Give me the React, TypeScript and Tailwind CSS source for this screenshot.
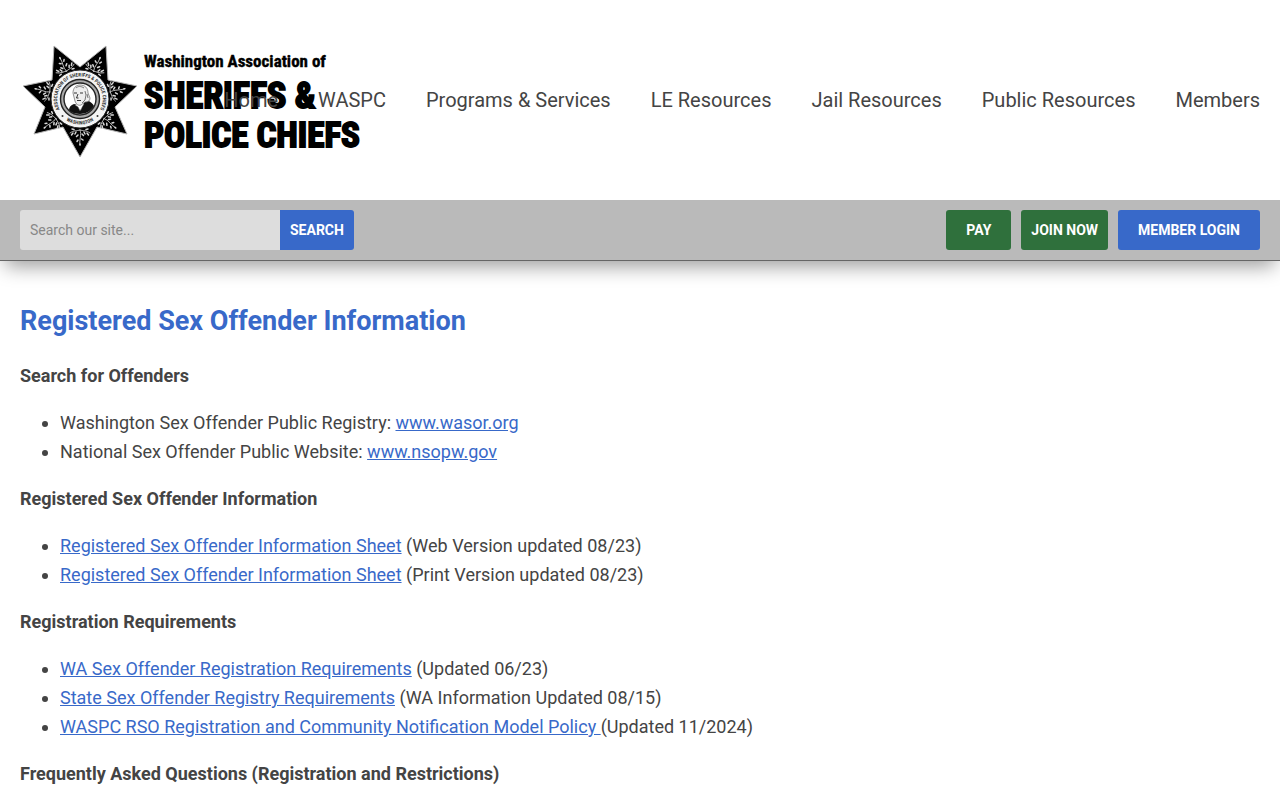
import type { ReactNode } from 'react';

const navItems = ['Home', 'WASPC', 'Programs & Services', 'LE Resources', 'Jail Resources', 'Public Resources', 'Members'];

// leaf sprig used on each point of the star, drawn pointing up from the badge centre
const Sprig = ({ angle }: { angle: number }) => (
  <g transform={`rotate(${angle} 60 59)`} fill="none" stroke="#d8d8d8" strokeLinecap="round">
    <path strokeWidth="0.8" d="M60 28C58 23 61 19 60 13M60 28C57 27 54 28 50 25M60 28C63 27 66 28 70 25" />
    <path strokeWidth="1.5" d="M58 24l-1.500-1.500M62 23l1.500-1.500M58.500 19l-1.500-1M62 18l1-1.500M60 14v-1" />
    <path strokeWidth="1.500" d="M56 26l-1-2M53 25l-1.500-2M54 28.500l-2 .5M64 26l1-2M67 25l1.500-2M66 28.500l2 .5" />
  </g>
);

const Logo = () => (
  <svg width="350" height="120" viewBox="0 0 350 120" role="img" aria-label="Washington Association of Sheriffs & Police Chiefs">
    <path
      d="M34 6L60 27L86 6L88 40L117 46L95 67L107 94L77 87L60 117L43 87L14 94L25 67L3 46L32 40Z"
      fill="#000"
      stroke="#b5b5b5"
      strokeWidth="1"
    />
    {[26, 77, 129, 180, 231, 283, 334].map(angle => <Sprig key={angle} angle={angle} />)}
    <circle cx="60" cy="59" r="29" fill="#f4f4f4" stroke="#222" strokeWidth="1" />
    <circle cx="60" cy="59" r="19.5" fill="#aaa" stroke="#222" strokeWidth="1.4" />
    <circle cx="60" cy="59" r="16" fill="#fff" stroke="#222" strokeWidth="1.4" />
    <path id="ring-top" d="M41 71.500A22.700 22.700 0 1 1 79 71.500" fill="none" />
    <path id="ring-bottom" d="M43 78A25.500 25.500 0 0 0 77 78" fill="none" />
    <g className="font-['Roboto_Condensed','Liberation_Sans_Narrow',sans-serif] font-bold" fill="#333" textAnchor="middle">
      <text fontSize="5"><textPath href="#ring-top" startOffset="50%">ASSOCIATION OF SHERIFFS &amp; POLICE CHIEFS</textPath></text>
      <text fontSize="5"><textPath href="#ring-bottom" startOffset="50%">WASHINGTON</textPath></text>
    </g>
    <circle cx="42.500" cy="76" r="1" fill="#333" />
    <circle cx="77.500" cy="76" r="1" fill="#333" />
    <path d="M49 70c0-3 2-5 5-6l4 1 3 5 2-8 4-2c4 2 6 4 7 6-3 5-8 8-14 8-4 0-8-1-11-4Z" fill="#111" />
    <path d="M55 65l3-2 5-1 1 2-4 7-2-4Z" fill="#fff" stroke="#444" strokeWidth=".5" />
    <path d="M53 53c0-5 3-8 7-8 5 0 8 3 8 8l2 5c0 3-2 4-5 4l-4 3c-3 1-5-1-6-4Z" fill="#eee" stroke="#777" strokeWidth=".8" />
    <path d="M54 53h3M60 53h3M58 54l-1.500 4h2M57 60.500h4" stroke="#333" strokeWidth="1" fill="none" />
    <path d="M65 51l1 4-1 5-3 3M67 54l1 4M56 48c2-2 5-2 8 0" stroke="#777" strokeWidth="1" fill="none" />
    <g className="font-['Roboto_Condensed','Liberation_Sans_Narrow',sans-serif] font-bold" fill="#000" stroke="#000">
      <text x="124" y="27" fontSize="17" strokeWidth=".4">Washington Association of</text>
      <text x="124" y="68" fontSize="36" strokeWidth="1.8">SHERIFFS &amp;</text>
      <text x="124" y="107" fontSize="35" strokeWidth="1.8">POLICE CHIEFS</text>
    </g>
  </svg>
);

const DocLink = ({ children }: { children: ReactNode }) => (
  <a href="#" className="text-[#3869c9] underline">{children}</a>
);

const Section = ({ title, children }: { title: string, children?: ReactNode }) => (
  <section>
    <h2 className="mb-[18px] font-bold">{title}</h2>
    <ul className="mb-[18px] list-disc pl-10">{children}</ul>
  </section>
);

export default function App() {
  return (
    <div className="min-h-screen overflow-x-hidden bg-white font-[Roboto,sans-serif] text-lg leading-[29px] text-[#444]">
      <header className="relative">
        <div className="relative z-10 grid items-center bg-white px-5 py-10">
          <a href="#" className="col-start-1 row-start-1 justify-self-start">
            <Logo />
          </a>
          <nav className="col-start-1 row-start-1 flex justify-end gap-10 justify-self-end text-xl whitespace-nowrap">
            {navItems.map(item => <a key={item} href="#">{item}</a>)}
          </nav>
        </div>
        <div className="flex items-center justify-between border-b border-[#666] bg-[#bababa] px-5 py-2.5 text-sm shadow-[0_10px_20px_-5px_rgba(0,0,0,0.4)]">
          <form className="flex" onSubmit={e => e.preventDefault()}>
            <input
              type="text"
              aria-label="Search our site"
              placeholder="Search our site..."
              className="h-10 w-[260px] rounded-l-[3px] bg-[#ddd] px-2.5 placeholder:text-[#888]"
            />
            <button className="h-10 rounded-r-[3px] bg-[#3869c9] px-2.5 font-bold text-white">SEARCH</button>
          </form>
          <div className="flex gap-2.5 font-bold text-white">
            <button className="h-10 rounded-[3px] bg-[#2f703c] px-5">PAY</button>
            <button className="h-10 rounded-[3px] bg-[#2f703c] px-2.5">JOIN NOW</button>
            <button className="h-10 rounded-[3px] bg-[#3869c9] px-5">MEMBER LOGIN</button>
          </div>
        </div>
      </header>

      <main className="px-5 pt-10">
        <h1 className="mb-5 text-[27px] leading-10 font-bold text-[#3869c9]">Registered Sex Offender Information</h1>
        <Section title="Search for Offenders">
          <li>Washington Sex Offender Public Registry: <DocLink>www.wasor.org</DocLink></li>
          <li>National Sex Offender Public Website: <DocLink>www.nsopw.gov</DocLink></li>
        </Section>
        <Section title="Registered Sex Offender Information">
          <li><DocLink>Registered Sex Offender Information Sheet</DocLink> (Web Version updated 08/23)</li>
          <li><DocLink>Registered Sex Offender Information Sheet</DocLink> (Print Version updated 08/23)</li>
        </Section>
        <Section title="Registration Requirements">
          <li><DocLink>WA Sex Offender Registration Requirements</DocLink> (Updated 06/23)</li>
          <li><DocLink>State Sex Offender Registry Requirements</DocLink> (WA Information Updated 08/15)</li>
          <li><DocLink>WASPC RSO Registration and Community Notification Model Policy </DocLink>(Updated 11/2024)</li>
        </Section>
        <h2 className="font-bold">Frequently Asked Questions (Registration and Restrictions)</h2>
      </main>
    </div>
  );
}
